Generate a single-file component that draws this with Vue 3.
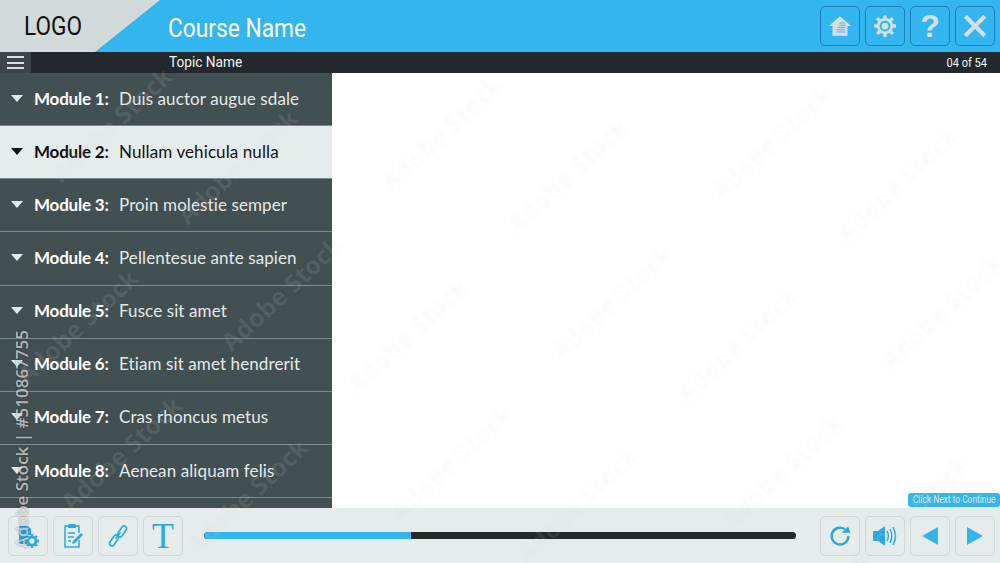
<template>
  <div class="shell">
    <header class="top">
      <div class="logo"><span class="squeeze logo-text">LOGO</span></div>
      <h1 class="course"><span class="squeeze course-text">Course Name</span></h1>
      <div class="tools">
        <button class="tool dark" v-for="t in topTools" :key="t" :aria-label="t">
          <svg v-if="t === 'home'" width="24" height="24" viewBox="0 0 32 32">
            <path d="M16 3 L31 16 H26 V29 H6 V16 H1 Z" fill="#d6dfe0" />
            <path d="M15 12h8M15 15h8M13 18h10M11 21h12M11 24h12" stroke="#33b5f0" stroke-width="1.2" />
          </svg>
          <svg v-else-if="t === 'settings'" width="24" height="24" viewBox="0 0 32 32">
            <circle cx="16" cy="16" r="9" fill="none" stroke="#d6dfe0" stroke-width="3.500" />
            <circle cx="16" cy="16" r="4.500" fill="#d6dfe0" />
            <path d="M16 1.500v6M16 24.500v6M1.500 16h6M24.500 16h6M5.500 5.500l4.500 4.500M22 22l4.500 4.500M26.500 5.500L22 10M10 22l-4.500 4.500" stroke="#d6dfe0" stroke-width="4.500" />
          </svg>
          <span v-else-if="t === 'help'" class="help">?</span>
          <svg v-else width="24" height="24" viewBox="0 0 32 32">
            <path d="M3 3 L29 29 M29 3 L3 29" stroke="#d6dfe0" stroke-width="5.500" />
          </svg>
        </button>
      </div>
    </header>

    <div class="topic">
      <div class="burger"><i></i><i></i><i></i></div>
      <span class="squeeze topic-name">Topic Name</span>
      <span class="squeeze count">04 of 54</span>
    </div>

    <main class="body">
      <nav class="modules">
        <div
          v-for="(m, i) in modules"
          :key="i"
          class="module"
          :class="{ active: i === 1 }"
        >
          <template v-if="m">
            <span class="caret"></span>
            <b class="num">Module {{ i + 1 }}:</b>
            <span class="title">{{ m }}</span>
          </template>
        </div>
      </nav>
      <section class="content"></section>
    </main>

    <footer class="bottom">
      <div class="hint"><span class="squeeze hint-text">Click Next to Continue</span></div>
      <div class="tools">
        <button class="tool" aria-label="settings">
          <svg width="30" height="30" viewBox="0 0 30 30">
            <path d="M6 5h9l3 3v6h-4v9H6z" fill="#2aa7e4" />
            <g transform="translate(19 20)">
              <circle r="4" fill="none" stroke="#2aa7e4" stroke-width="2.600" />
              <path d="M0-7v3M0 4v3M-7 0h3M4 0h3M-5-5l2 2M3 3l2 2M5-5L3-3M-3 3l-2 2" stroke="#2aa7e4" stroke-width="2.400" />
            </g>
          </svg>
        </button>
        <button class="tool" aria-label="notes">
          <svg width="26" height="26" viewBox="0 0 26 26" fill="none" stroke="#2aa7e4" stroke-width="1.500">
            <path d="M8 3H5v21h14v-7M15 3h4v7" />
            <rect x="8" y="1" width="8" height="4" rx="1" fill="#2aa7e4" stroke="none" />
            <path d="M8 10h7M8 14h6M8 18h3" />
            <path d="M12 21l1-3 8-8 2 2-8 8z" fill="#2aa7e4" stroke="none" />
          </svg>
        </button>
        <button class="tool" aria-label="link">
          <svg width="24" height="24" viewBox="0 0 24 24" fill="none" stroke="#2aa7e4" stroke-width="1.600">
            <rect x="-2.500" y="-6" width="5" height="12" rx="2.500" transform="translate(16 7.500) rotate(34)" />
            <rect x="-2.500" y="-6" width="5" height="12" rx="2.500" transform="translate(8 16.500) rotate(34)" />
            <path d="M9.500 14.500l5-6" />
          </svg>
        </button>
        <button class="tool" aria-label="text"><span class="big-t">T</span></button>
      </div>
      <div class="progress"><div class="fill" :style="{ width: progress + '%' }"></div></div>
      <div class="tools">
        <button class="tool" aria-label="replay">
          <svg width="24" height="24" viewBox="0 0 30 30" fill="none">
            <path d="M21 6.500A10.500 10.500 0 1 0 25.500 15" stroke="#2aa7e4" stroke-width="3" />
            <path d="M17 11h11l-3-8z" fill="#2aa7e4" />
          </svg>
        </button>
        <button class="tool" aria-label="audio">
          <svg width="26" height="22" viewBox="0 0 26 22" fill="none">
            <path d="M1 6h5l7-5v20l-7-5H1z" fill="#2aa7e4" />
            <path d="M15 6q2.500 5 0 10M18 4q3.500 7 0 14M21 2q5 9 0 18" stroke="#2aa7e4" stroke-width="1.500" />
          </svg>
        </button>
        <button class="tool" aria-label="previous">
          <svg width="18" height="20" viewBox="0 0 18 20"><path d="M1 10 L17 1 V19 Z" fill="#33b5f0" /></svg>
        </button>
        <button class="tool" aria-label="next">
          <svg width="18" height="20" viewBox="0 0 18 20"><path d="M1 1 L17 10 L1 19 Z" fill="#33b5f0" /></svg>
        </button>
      </div>
    </footer>

    <span
      v-for="(w, i) in watermarks"
      :key="i"
      class="mark"
      aria-hidden="true"
      :style="{ left: w.x + 'px', top: w.y + 'px' }"
    >Adobe Stock</span>
    <span class="stamp">Adobe Stock | #510867755</span>
  </div>
</template>

<script setup>
const topTools = ['home', 'settings', 'help', 'close'];

const modules = [
  'Duis auctor augue sdale',
  'Nullam vehicula nulla',
  'Proin molestie semper',
  'Pellentesue ante sapien',
  'Fusce sit amet',
  'Etiam sit amet hendrerit',
  'Cras rhoncus metus',
  'Aenean aliquam felis',
  '',
];

const progress = 35;

// faint stock marks come in pairs, and the pairs repeat on a diagonal lattice
const watermarks = [];
for (let m = -4; m <= 4; m++) {
  for (let n = -4; n <= 4; n++) {
    const x = 441 + m * 170 - n * 160;
    const y = 133 + m * 169 + n * 160;
    for (const [dx, dy] of [[0, 0], [126, 42]]) {
      const px = x + dx;
      const py = y + dy;
      if (px > 30 && px < 960 && py > 20 && py < 540) watermarks.push({ x: px, y: py });
    }
  }
}
</script>

<style>
html,
body {
  margin: 0;
  overflow: hidden;
}
</style>

<style scoped>
.shell {
  position: relative;
  width: 1000px;
  height: 563px;
  display: flex;
  flex-direction: column;
  overflow: hidden;
  background: #fff;
  font-family: "Lato", "Liberation Sans", sans-serif;
}

.squeeze {
  display: inline-block;
  white-space: nowrap;
  font-family: "Roboto", sans-serif;
  transform-origin: left center;
}

.top {
  height: 52px;
  display: flex;
  align-items: center;
  background: #33b5f0;
  padding-right: 5px;
}

.logo {
  width: 160px;
  height: 52px;
  box-sizing: border-box;
  padding-left: 24px;
  line-height: 52px;
  background: #d2dada;
  clip-path: polygon(0 0, 100% 0, 95px 100%, 0 100%);
  color: #111;
}

.logo-text {
  font-size: 26px;
  transform: scaleX(0.87);
}

.course {
  margin: 2px 0 0 8px;
  flex: 1;
  font-size: 26px;
  font-weight: 400;
  color: #fff;
}

.course-text {
  transform: scaleX(0.875);
}

.tools {
  display: flex;
  gap: 5px;
}

.tool {
  width: 40px;
  height: 40px;
  padding: 0;
  display: flex;
  align-items: center;
  justify-content: center;
  background: transparent;
  border: 1px solid #cfd8d8;
  border-radius: 5px;
}

.tool.dark {
  border-color: #1d7fb8;
}

.help {
  font: 700 32px "Liberation Sans", sans-serif;
  color: #d6dfe0;
}

.big-t {
  font: 400 36px/36px "Liberation Serif", serif;
  color: #2aa7e4;
}

.topic {
  height: 21px;
  display: flex;
  align-items: center;
  background: #22282b;
  color: #f2f4f4;
}

.burger {
  width: 31px;
  height: 21px;
  box-sizing: border-box;
  padding: 4px 7px;
  display: flex;
  flex-direction: column;
  justify-content: space-between;
  background: #3c4548;
}

.burger i {
  height: 2px;
  background: #d6dfe0;
}

.topic-name {
  margin: -2px 0 0 138px;
  font-size: 15px;
  transform: scaleX(0.91);
}

.count {
  margin-left: auto;
  margin-right: 13px;
  font-size: 12px;
  transform: scaleX(0.92);
  transform-origin: right center;
}

.body {
  flex: 1;
  min-height: 0;
  display: flex;
}

.modules {
  width: 332px;
  overflow: hidden;
  background: #435052;
}

.module {
  height: 53.150px;
  box-sizing: border-box;
  padding-bottom: 2px;
  display: flex;
  align-items: center;
  border-bottom: 1px solid #7d8d8c;
  color: #e4e9e9;
  font-size: 17px;
  font-variant-ligatures: none;
  letter-spacing: 0.1px;
}

.module.active {
  background: #e6ecec;
  color: #111;
}

.caret {
  width: 0;
  height: 0;
  margin: 0 11px;
  border-left: 6px solid transparent;
  border-right: 6px solid transparent;
  border-top: 7px solid currentColor;
}

.num {
  width: 85px;
  color: #fff;
  letter-spacing: -0.2px;
}

.active .num {
  color: #111;
}

.content {
  flex: 1;
}

.bottom {
  position: relative;
  height: 55px;
  display: flex;
  align-items: center;
  gap: 21px;
  padding: 0 5px 0 8px;
  background: #e6ecec;
}

.hint {
  position: absolute;
  right: 0;
  top: -15px;
  width: 92px;
  height: 14px;
  display: flex;
  justify-content: center;
  border-radius: 3px;
  background: #33b5f0;
  color: #e0e8e8;
}

.hint-text {
  flex: none;
  font-size: 10px;
  line-height: 14px;
  transform: scaleX(0.84);
  transform-origin: center;
}

.progress {
  flex: 1;
  height: 7px;
  margin-right: 3px;
  border-radius: 4px;
  background: #22282b;
  overflow: hidden;
}

.fill {
  height: 100%;
  background: #33b5f0;
}

.mark {
  position: absolute;
  transform: translate(-50%, -50%) rotate(-43deg);
  white-space: nowrap;
  pointer-events: none;
  font: 700 25px "Open Sans", sans-serif;
  color: rgba(255, 255, 255, 0.09);
  text-shadow: 0 0 4px rgba(0, 0, 0, 0.025);
}

.stamp {
  position: absolute;
  left: 10px;
  bottom: 15px;
  writing-mode: vertical-rl;
  transform: rotate(180deg);
  font: 600 17px "Open Sans", sans-serif;
  color: rgba(255, 255, 255, 0.65);
  text-shadow: 0 0 2px rgba(0, 0, 0, 0.45);
  white-space: nowrap;
}
</style>
